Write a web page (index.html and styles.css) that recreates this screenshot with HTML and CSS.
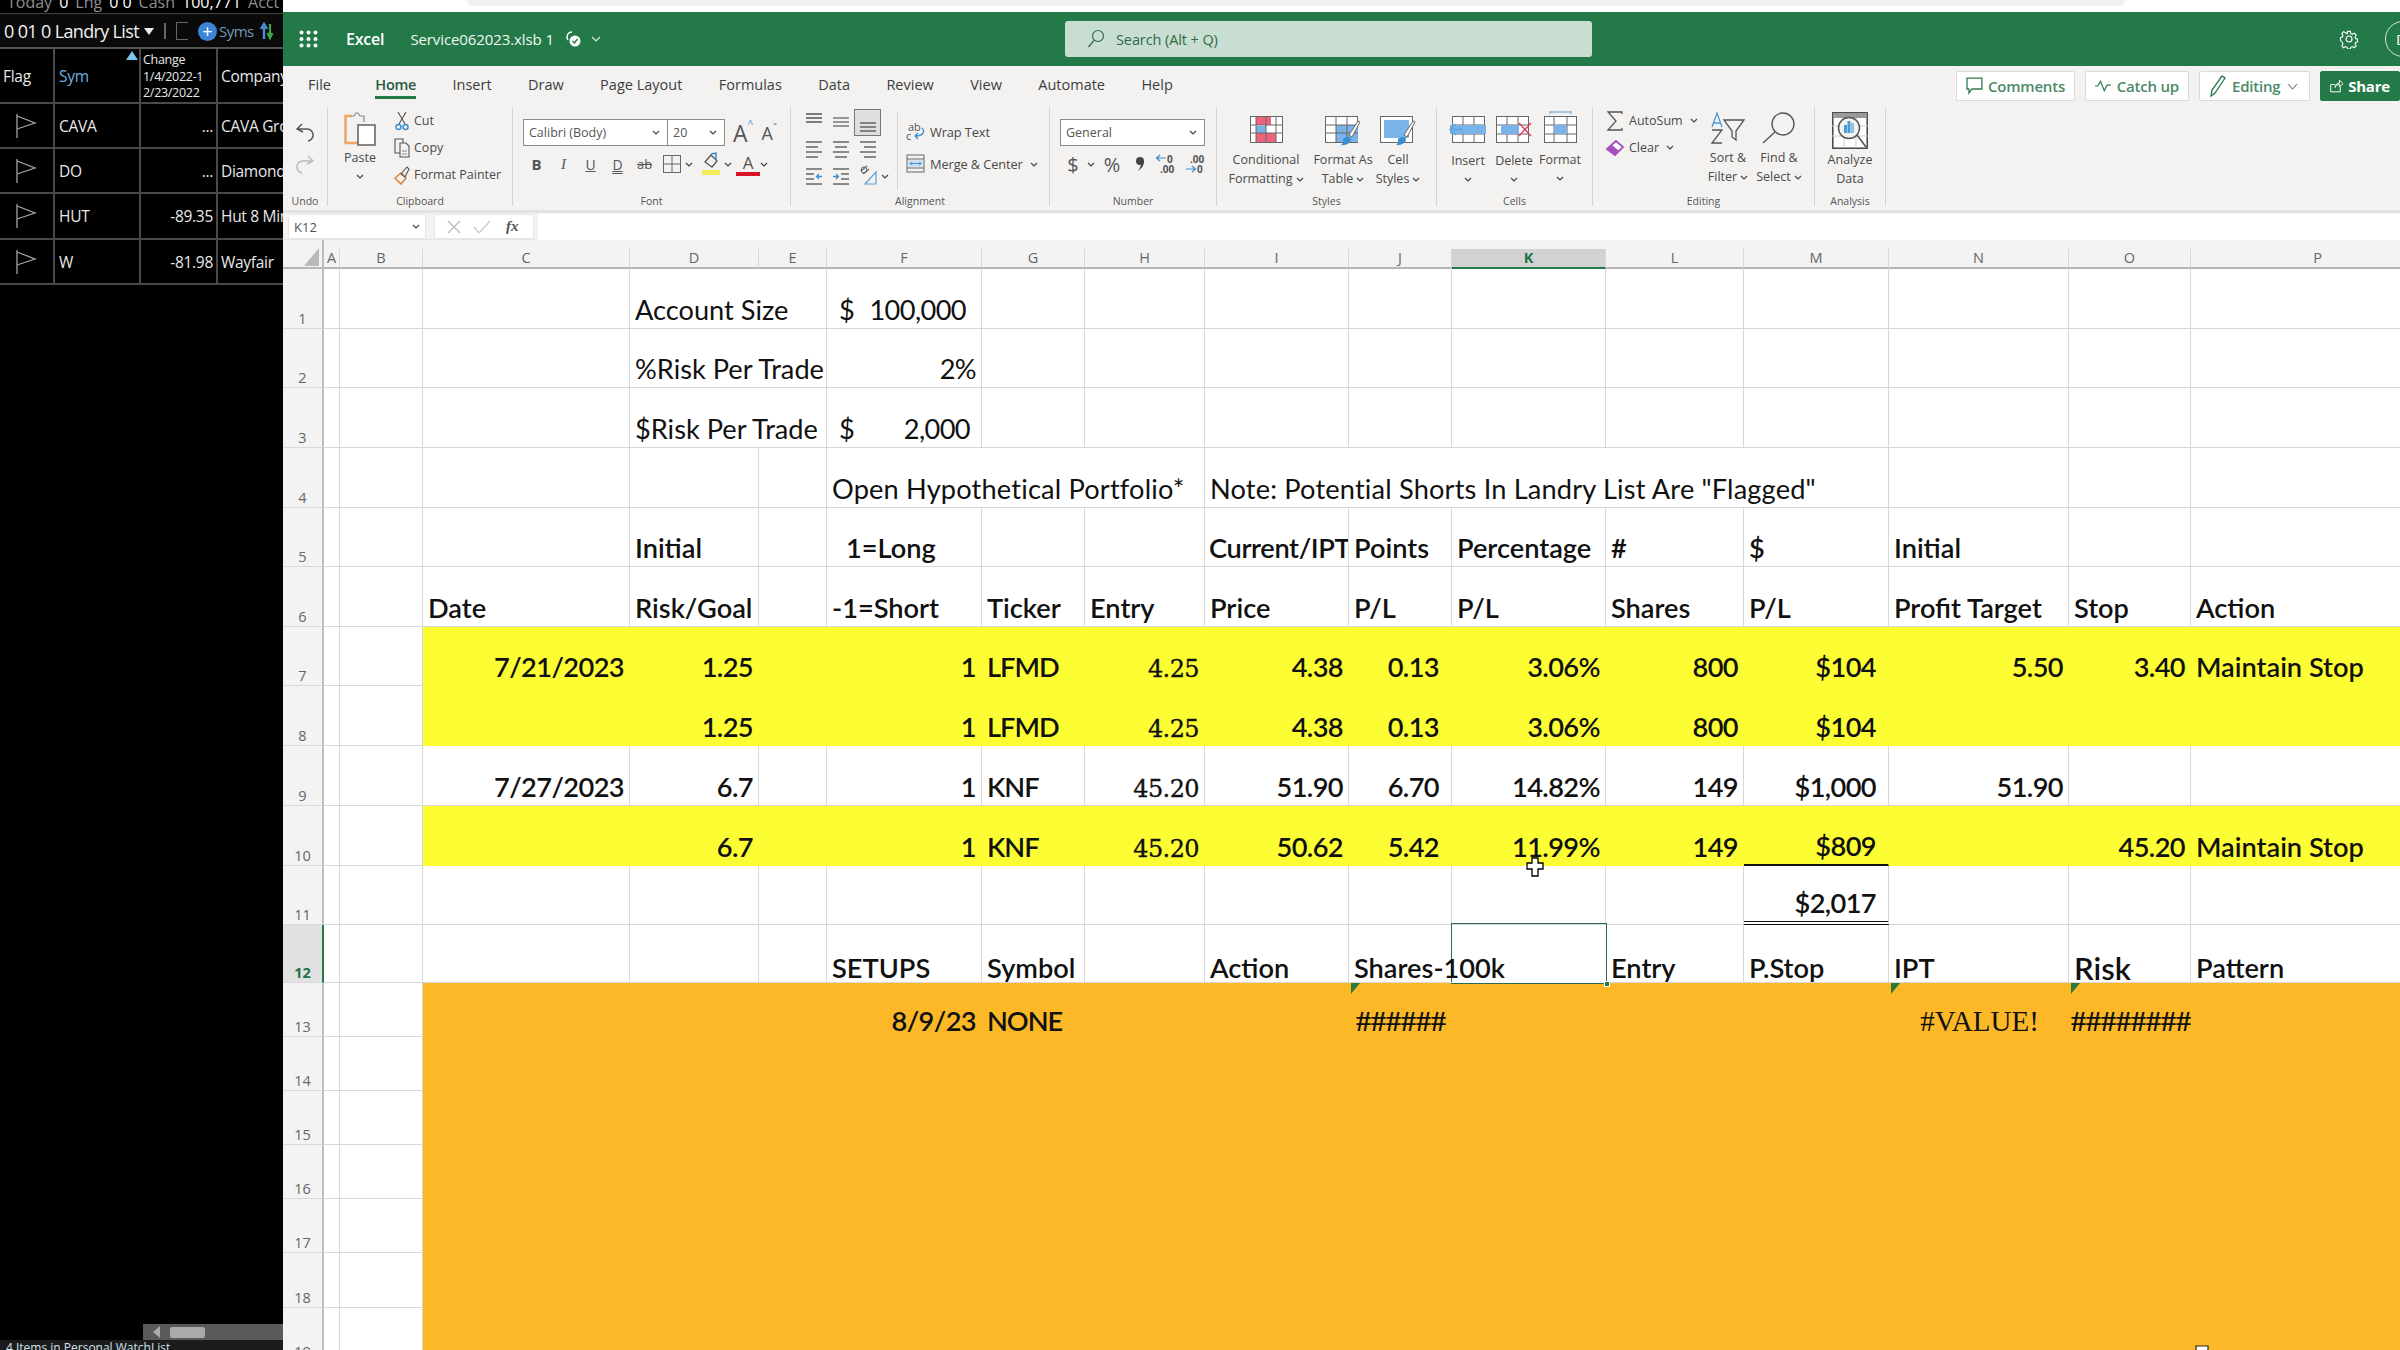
FILE: index.html
```
<!DOCTYPE html>
<html lang="en">
<head>
<meta charset="utf-8">
<title>Excel</title>
<link rel="stylesheet" href="styles.css">
</head>
<body>
<svg class="sprite" width="0" height="0"><symbol id="ch" viewBox="0 0 8 5"><path d="M1 1l3 3 3-3" fill="none" stroke="#444" stroke-width="1.2"/></symbol>
<symbol id="flag" viewBox="0 0 22 26"><path d="M2 1v24M2 3l18 7-18 6" fill="none" stroke="#a5a5a5" stroke-width="1.3"/></symbol></svg>
<div class="app">
<aside class="left">
  <div class="l-top"><span class="mut">Today</span><b>0</b><span class="mut">Lng</span><b>0 0</b><span class="mut">Cash</span><b>100,771</b><span class="mut">Acct Val</span><b>1</b></div>
  <div class="l-bar">
    <span class="l-title">0 01 0 Landry List</span><span class="tri"></span><span class="l-sep"></span><span class="l-box"></span>
    <span class="l-plus">+</span><span class="l-syms">Syms</span>
    <svg class="l-arrows" width="14" height="20" viewBox="0 0 14 20"><path d="M4 18V6M1 8l3-5 3 5" stroke="#4a90d9" stroke-width="2.4" fill="none"/><path d="M10 3v12M7.500 12l2.500 5 2.500-5" stroke="#3fa34d" stroke-width="2.2" fill="none"/></svg>
    <span class="l-lines"></span>
  </div>
  <div class="l-table">
    <div class="lc lh">Flag</div><div class="lc lh sym"><i class="sort"></i>Sym</div><div class="lc chg">Change<br>1/4/2022-1<br>2/23/2022</div><div class="lc lh">Company</div>
    <div class="lc fl"><svg width="22" height="26"><use href="#flag"/></svg></div><div class="lc">CAVA</div><div class="lc num">...</div><div class="lc">CAVA Group</div>
    <div class="lc fl"><svg width="22" height="26"><use href="#flag"/></svg></div><div class="lc">DO</div><div class="lc num">...</div><div class="lc">Diamond</div>
    <div class="lc fl"><svg width="22" height="26"><use href="#flag"/></svg></div><div class="lc">HUT</div><div class="lc num">-89.35</div><div class="lc">Hut 8 Mining</div>
    <div class="lc fl"><svg width="22" height="26"><use href="#flag"/></svg></div><div class="lc">W</div><div class="lc num">-81.98</div><div class="lc">Wayfair</div>
  </div>
  <div class="l-space"></div>
  <div class="l-scroll"><i class="s-arrow"></i><i class="s-thumb"></i></div>
  <div class="l-status">4 Items in Personal WatchList</div>
</aside>

<main class="excel">
  <div class="topstrip"><div class="topshape"></div></div>
  <header class="titlebar">
    <div class="t-left">
    <svg class="waffle" width="19" height="18" viewBox="0 0 19 18" fill="#fff"><circle cx="2.500" cy="2.500" r="2"/><circle cx="9.500" cy="2.500" r="2"/><circle cx="16.500" cy="2.500" r="2"/><circle cx="2.500" cy="9" r="2"/><circle cx="9.500" cy="9" r="2"/><circle cx="16.500" cy="9" r="2"/><circle cx="2.500" cy="15.500" r="2"/><circle cx="9.500" cy="15.500" r="2"/><circle cx="16.500" cy="15.500" r="2"/></svg>
    <span class="appname">Excel</span>
    <span class="fname">Service062023.xlsb 1</span>
    <svg class="cloud" width="18" height="18" viewBox="0 0 18 18"><path d="M8 2a5 5 0 0 0-4 8" fill="none" stroke="#fff" stroke-width="1.300"/><circle cx="11" cy="11" r="5.500" fill="#fff"/><path d="M8.500 11l2 2 3-4" fill="none" stroke="#237a48" stroke-width="1.400"/></svg>
    <svg class="tchev" width="10" height="6" viewBox="0 0 10 6"><path d="M1 1l4 4 4-4" fill="none" stroke="#d8e8de" stroke-width="1.200"/></svg>
    </div>
    <div class="search">
      <svg width="18" height="20" viewBox="0 0 18 20"><circle cx="11" cy="7" r="5.500" fill="none" stroke="#2e6b4a" stroke-width="1.200"/><path d="M7 11.500L1.500 18" stroke="#2e6b4a" stroke-width="1.200"/></svg>
      <span>Search (Alt + Q)</span>
    </div>
    <svg class="gear" width="20" height="20" viewBox="0 0 20 20" fill="none" stroke="#fff" stroke-width="1.200"><circle cx="10" cy="10" r="3"/><path d="M8.500 1.500h3l.5 2.500 1.800.8 2.200-1.300 2 2.200-1.300 2.100.6 1.700 2.200.7v3l-2.200.6-.6 1.700 1.300 2.200-2 2-2.200-1.300-1.800.8-.5 2h-3l-.5-2-1.800-.8-2.200 1.300-2-2 1.300-2.200-.6-1.700L.5 11.500v-3l2.200-.7.6-1.700L2 4l2-2.200 2.200 1.300L8 4.200z" transform="translate(1 1) scale(.9)"/></svg>
    <div class="avatar">D</div>
  </header>

  <nav class="tabs">
    <span class="tab first">File</span><span class="tab on">Home</span><span class="tab">Insert</span><span class="tab">Draw</span><span class="tab">Page Layout</span><span class="tab">Formulas</span><span class="tab">Data</span><span class="tab">Review</span><span class="tab">View</span><span class="tab">Automate</span><span class="tab">Help</span>
    <div class="actions">
      <button class="act">
        <svg width="17" height="18" viewBox="0 0 17 18" fill="none" stroke="#2c7a50" stroke-width="1.300"><path d="M1 1h15v11H6l-3 4v-4H1z"/></svg>Comments</button>
      <button class="act">
        <svg width="18" height="12" viewBox="0 0 18 12" fill="none" stroke="#2c7a50" stroke-width="1.300"><path d="M0 6h3l3-5 4 10 3-6h4"/></svg>Catch up</button>
      <button class="act">
        <svg width="18" height="24" viewBox="0 0 18 24" fill="none" stroke="#2c7a50" stroke-width="1.300"><path d="M2 22l1-6L13 2l3 2L6 19z"/></svg>Editing
        <svg class="ec" width="11" height="7" viewBox="0 0 11 7"><path d="M1 1l4.500 5L10 1" fill="none" stroke="#777" stroke-width="1.100"/></svg></button>
      <button class="act share">
        <svg width="18" height="20" viewBox="0 0 18 20" fill="none" stroke="#fff" stroke-width="1.300"><path d="M14 11v7H1V8h6M7 12c0-4 3-6 6-6V2l5 5-5 4V8c-3 0-5 1-6 4z"/></svg>Share</button>
    </div>
  </nav>

  <section class="ribbon">
    <div class="grp g-undo">
      <div class="g-body undo-body">
        <svg width="18" height="20" viewBox="0 0 18 20" fill="none" stroke="#555" stroke-width="1.500"><path d="M6 1L1 6l6 3M1 6h9a6 6 0 0 1 2 12"/></svg>
        <svg width="18" height="20" viewBox="0 0 18 20" fill="none" stroke="#bbb" stroke-width="1.500"><path d="M12 1l5 5-6 3M17 6H8a6 6 0 0 0-2 12"/></svg>
      </div>
      <div class="g-label">Undo</div>
    </div>

    <div class="grp g-clip">
      <div class="g-body clip-body">
        <div class="paste">
          <svg width="32" height="34" viewBox="0 0 32 34"><path d="M8 4H1.500v27H14" fill="none" stroke="#e8a866" stroke-width="2.500"/><path d="M8 4h2l2-3h2l2 3h4v6" fill="none" stroke="#888" stroke-width="1.200"/><rect x="14" y="13" width="17" height="20" fill="#fff" stroke="#555" stroke-width="1.400"/></svg>
          <span>Paste</span>
          <svg class="chev" width="8" height="5"><use href="#ch"/></svg>
        </div>
        <div class="smalls">
          <div class="sm"><svg width="16" height="20" viewBox="0 0 16 20" fill="none"><path d="M4 1l7 12M12 1L5 13" stroke="#555" stroke-width="1.100"/><circle cx="4.500" cy="16" r="2.500" stroke="#3b8fd0" stroke-width="1.500"/><circle cx="11.500" cy="16" r="2.500" stroke="#3b8fd0" stroke-width="1.500"/></svg>Cut</div>
          <div class="sm"><svg width="16" height="20" viewBox="0 0 16 20" fill="#f3f2f1" stroke="#555" stroke-width="1.100"><path d="M1 1h8v14H1z"/><path d="M6 5h6l3 3v11H6z"/><path d="M8 13h5M8 16h5" stroke="#888"/></svg>Copy</div>
          <div class="sm"><svg width="16" height="20" viewBox="0 0 16 20" fill="none"><path d="M1 13l6-5 5 5-5 6z" stroke="#d8893a" stroke-width="1.600"/><path d="M7 9l6-7 2 2-4 8z" stroke="#555" stroke-width="1.100"/></svg>Format Painter</div>
        </div>
      </div>
      <div class="g-label">Clipboard</div>
    </div>

    <div class="grp g-font">
      <div class="g-body font-body">
        <div class="combos">
          <div class="combo c-font"><span>Calibri (Body)</span><svg class="chev" width="8" height="5"><use href="#ch"/></svg></div>
          <div class="combo c-size"><span>20</span><svg class="chev" width="8" height="5"><use href="#ch"/></svg></div>
          <span class="grow">A<i>^</i></span><span class="shrink">A<i>ˇ</i></span>
        </div>
        <div class="frow">
          <span class="fb bold">B</span><span class="fb ital">I</span><span class="fb und">U</span><span class="fb dbl">D</span><span class="fb strike">ab</span>
          <span class="fb"><svg width="18" height="18" viewBox="0 0 18 18" fill="none" stroke="#666"><rect x=".5" y=".5" width="17" height="17"/><path d="M9 0v18M0 9h18"/></svg></span><svg class="mchev" width="8" height="5"><use href="#ch"/></svg>
          <span class="fb ml4"><svg width="18" height="24" viewBox="0 0 18 24"><path d="M3 10l6-7 6 6-5 6z" fill="none" stroke="#555" stroke-width="1.300"/><path d="M9 2l5-1v7" fill="none" stroke="#3b7fc4" stroke-width="1.400"/><rect y="18" width="18" height="5" fill="#f2ef5a"/></svg></span><svg class="mchev" width="8" height="5"><use href="#ch"/></svg>
          <span class="fb fcolor ml4">A</span><svg class="mchev" width="8" height="5"><use href="#ch"/></svg>
        </div>
      </div>
      <div class="g-label">Font</div>
    </div>

    <div class="grp g-align">
      <div class="g-body align-body">
        <div class="al-grid">
          <span class="ai"><svg width="18" height="27" viewBox="0 0 18 27" stroke="#555" stroke-width="1.300"><path d="M1 5h16M1 9h16M1 13h16"/></svg></span>
          <span class="ai"><svg width="18" height="27" viewBox="0 0 18 27" stroke="#777" stroke-width="1.300"><path d="M1 9h16M1 13h16M1 17h16"/></svg></span>
          <span class="ai sel"><svg width="18" height="25" viewBox="0 0 18 25" stroke="#666" stroke-width="1.300"><path d="M1 13h16M1 17h16M1 21h16"/></svg></span>
          <span class="ai"><svg width="18" height="26" viewBox="0 0 18 26" stroke="#666" stroke-width="1.300"><path d="M1 6h16M1 11h12M1 16h16M1 21h12"/></svg></span>
          <span class="ai"><svg width="18" height="26" viewBox="0 0 18 26" stroke="#666" stroke-width="1.300"><path d="M1 6h16M3 11h12M1 16h16M3 21h12"/></svg></span>
          <span class="ai"><svg width="18" height="26" viewBox="0 0 18 26" stroke="#666" stroke-width="1.300"><path d="M1 6h16M5 11h12M1 16h16M5 21h12"/></svg></span>
          <span class="ai"><svg width="18" height="26" viewBox="0 0 18 26" fill="none" stroke="#666" stroke-width="1.300"><path d="M1 6h16M1 11h8M1 16h8M1 21h16"/><path d="M17 13.500h-5M14 11l-2.500 2.500 2.500 2.500" stroke="#3b8fd0"/></svg></span>
          <span class="ai"><svg width="18" height="26" viewBox="0 0 18 26" fill="none" stroke="#666" stroke-width="1.300"><path d="M1 6h16M9 11h8M9 16h8M1 21h16"/><path d="M1 13.500h5M4 11l2.500 2.500L4 16" stroke="#3b8fd0"/></svg></span>
          <span class="ai"><svg width="18" height="24" viewBox="0 0 18 24" fill="none"><path d="M2 8l6-5M4 11l6-5" stroke="#666" stroke-width="1.300"/><circle cx="5" cy="7" r="3" stroke="#666"/><path d="M6 21L17 9v12z" stroke="#5a9fd8" stroke-width="1.200"/></svg><svg class="ochev" width="8" height="5"><use href="#ch"/></svg></span>
        </div>
        <i class="al-sep"></i>
        <div class="wrapcol">
          <div class="sm tall"><svg width="20" height="20" viewBox="0 0 20 20"><text x="2" y="9" class="ab">ab</text><text x="0" y="18" class="ab">c</text><path d="M16 6c4 4 0 8-6 8M12 11l-3 3 3 3" fill="none" stroke="#3b8fd0" stroke-width="1.300"/></svg>Wrap Text</div>
          <div class="sm tall"><svg width="20" height="20" viewBox="0 0 20 20" fill="none"><rect x="1" y="1" width="17" height="17" stroke="#666"/><path d="M1 5h17M1 14h17" stroke="#666"/><rect x="2" y="6" width="15" height="7" fill="#cfe2f3"/><path d="M4 9.500h11M6 7.500l-2 2 2 2M13 7.500l2 2-2 2" stroke="#3b8fd0"/></svg>Merge &amp; Center <svg class="ichev" width="8" height="5"><use href="#ch"/></svg></div>
        </div>
      </div>
      <div class="g-label">Alignment</div>
    </div>

    <div class="grp g-num">
      <div class="g-body num-body">
        <div class="combo c-num"><span>General</span><svg class="chev" width="8" height="5"><use href="#ch"/></svg></div>
        <div class="nrow">
          <span class="nb n-d">$</span><svg class="mchev nch" width="8" height="5"><use href="#ch"/></svg><span class="nb n-p">%</span><span class="nb n-c"><svg width="10" height="16" viewBox="0 0 10 16" fill="#444"><circle cx="5" cy="5" r="4"/><path d="M9 5c0 5-3 8-6 10 2-3 3-5 3-8z"/></svg></span>
          <span class="nb n-s"><svg width="22" height="22" viewBox="0 0 22 22" fill="none"><path d="M11 5H2M5 2L1.500 5 5 8" stroke="#3b8fd0" stroke-width="1.200"/><text x="12" y="10" class="dec">0</text><text x="5" y="20" class="dec">.00</text></svg></span>
          <span class="nb n-t"><svg width="22" height="22" viewBox="0 0 22 22" fill="none"><text x="6" y="10" class="dec">.00</text><text x="13" y="20" class="dec">0</text><path d="M2 16h9M8 13l3.500 3L8 19" stroke="#3b8fd0" stroke-width="1.200"/></svg></span>
        </div>
      </div>
      <div class="g-label">Number</div>
    </div>

    <div class="grp g-sty">
      <div class="g-body big-row">
        <div class="big b-cf">
          <svg width="33" height="27" viewBox="0 0 33 27"><rect x=".5" y=".5" width="32" height="26" fill="#fff" stroke="#666"/><rect x="6" y="1" width="15" height="8" fill="#f0627c"/><rect x="6" y="10" width="10" height="7" fill="#79b3e8"/><rect x="6" y="17" width="20" height="9" fill="#f0627c"/><path d="M6 0v27M16 0v27M26 0v27M0 9h33M0 17h33" stroke="#666" fill="none"/></svg>
          <span>Conditional<br>Formatting<svg class="ichev" width="8" height="5"><use href="#ch"/></svg></span>
        </div>
        <div class="big b-ft">
          <svg width="36" height="32" viewBox="0 0 36 32"><rect x=".5" y=".5" width="32" height="26" fill="#fff" stroke="#666"/><rect x="11" y="9" width="22" height="17" fill="#79b3e8"/><path d="M11 0v27M22 0v27M0 9h33M0 17h33" stroke="#666" fill="none"/><path d="M24 19l9-14 2 1-8 15z" fill="#fff" stroke="#666"/><path d="M18 23c4-3 8-2 8 0 0 4-6 7-10 6 2-1 2-3 2-6z" fill="#3b8fd0"/></svg>
          <span>Format As<br>Table<svg class="ichev" width="8" height="5"><use href="#ch"/></svg></span>
        </div>
        <div class="big b-cs">
          <svg width="36" height="32" viewBox="0 0 36 32"><rect x=".5" y=".5" width="32" height="26" fill="#fff" stroke="#666"/><rect x="4" y="4" width="25" height="18" fill="#79b3e8"/><path d="M24 19l9-14 2 1-8 15z" fill="#fff" stroke="#666"/><path d="M18 23c4-3 8-2 8 0 0 4-6 7-10 6 2-1 2-3 2-6z" fill="#3b8fd0"/></svg>
          <span>Cell<br>Styles<svg class="ichev" width="8" height="5"><use href="#ch"/></svg></span>
        </div>
      </div>
      <div class="g-label">Styles</div>
    </div>

    <div class="grp g-cells">
      <div class="g-body big-row cells-row">
        <div class="big b-cell">
          <svg width="38" height="27" viewBox="0 0 38 27"><rect x="3.500" y=".5" width="32" height="26" fill="#fff" stroke="#666"/><path d="M14 0v27M25 0v27M3 9h33M3 18h33" stroke="#666" fill="none"/><rect x="1" y="9" width="36" height="9" fill="#79b3e8"/><path d="M14 13.500H2M7 8l-6 5.500L7 19" stroke="#5aa5e0" fill="none" stroke-width="1.500"/></svg>
          <span>Insert</span><svg class="chev" width="8" height="5"><use href="#ch"/></svg>
        </div>
        <div class="big b-cell">
          <svg width="36" height="27" viewBox="0 0 36 27"><rect x=".5" y=".5" width="32" height="26" fill="#fff" stroke="#666"/><path d="M11 0v27M22 0v27M0 9h33M0 18h33" stroke="#666" fill="none"/><rect x="5" y="9" width="18" height="9" fill="#79b3e8"/><path d="M23 7l12 13M35 7L23 20" stroke="#e0455f" stroke-width="1.500"/></svg>
          <span>Delete</span><svg class="chev" width="8" height="5"><use href="#ch"/></svg>
        </div>
        <div class="big b-cell b-fmt">
          <svg width="33" height="32" viewBox="0 0 33 32"><path d="M6 1h21M6 0v3M27 0v3" stroke="#5a9fd8" fill="none"/><rect x=".5" y="5.500" width="32" height="26" fill="#fff" stroke="#666"/><path d="M0 14h33M0 23h33M10 5v27M23 5v27" stroke="#666" fill="none"/><rect x="10" y="14" width="13" height="9" fill="#79b3e8"/></svg>
          <span>Format</span><svg class="chev" width="8" height="5"><use href="#ch"/></svg>
        </div>
      </div>
      <div class="g-label">Cells</div>
    </div>

    <div class="grp g-edit">
      <div class="g-body big-row">
        <div class="smalls ed">
          <div class="sm"><svg width="19" height="20" viewBox="0 0 19 20" fill="none" stroke="#555" stroke-width="1.300"><path d="M16 3V1H2l8 9-8 9h14v-2"/></svg>AutoSum <svg class="ichev" width="8" height="5"><use href="#ch"/></svg></div>
          <div class="sm"><svg width="19" height="20" viewBox="0 0 19 20" fill="none"><path d="M1 11l9-8 7 6-8 8z" fill="#fff" stroke="#a64fbf" stroke-width="1.800"/><path d="M1 11l5-4 7 6-4 4z" fill="#a64fbf"/></svg>Clear <svg class="ichev" width="8" height="5"><use href="#ch"/></svg></div>
        </div>
        <div class="big b-sort">
          <svg width="36" height="32" viewBox="0 0 36 32"><path d="M2 15L7 1l5 14M3.500 11h7" fill="none" stroke="#4a9ad4" stroke-width="1.300"/><path d="M2 18h10L2 31h10" fill="none" stroke="#555" stroke-width="1.300"/><path d="M14 8h20l-8 11v9l-4-3v-6z" fill="none" stroke="#555" stroke-width="1.300"/></svg>
          <span>Sort &amp;<br>Filter<svg class="ichev" width="8" height="5"><use href="#ch"/></svg></span>
        </div>
        <div class="big b-find">
          <svg width="36" height="32" viewBox="0 0 36 32" fill="none" stroke="#555" stroke-width="1.300"><circle cx="22" cy="12" r="11"/><path d="M14 20L2 31"/></svg>
          <span>Find &amp;<br>Select<svg class="ichev" width="8" height="5"><use href="#ch"/></svg></span>
        </div>
      </div>
      <div class="g-label">Editing</div>
    </div>

    <div class="grp g-ana">
      <div class="g-body big-row">
        <div class="big b-ana">
          <svg width="36" height="37" viewBox="0 0 36 37"><rect x=".8" y=".8" width="34.400" height="35.400" fill="#fff" stroke="#444" stroke-width="1.500"/><rect x="1" y="1" width="34" height="5" fill="#999"/><path d="M12 6v30M24 6v30M0 14h36M0 24h36" stroke="#ccc" fill="none"/><circle cx="17" cy="16" r="10.500" fill="#f3f2f1" stroke="#555" stroke-width="1.500"/><rect x="12" y="13" width="3" height="8" fill="#4a9ad4"/><rect x="15.500" y="9" width="3" height="12" fill="#4a9ad4"/><rect x="19" y="11" width="3" height="10" fill="#8fc1e8"/><path d="M25 23l9 12" stroke="#555" stroke-width="1.500"/></svg>
          <span>Analyze<br>Data</span>
        </div>
      </div>
      <div class="g-label">Analysis</div>
    </div>
  </section>

  <div class="fbar">
    <div class="namebox"><span>K12</span><svg class="chev" width="8" height="5"><use href="#ch"/></svg></div>
    <div class="fxbox">
      <svg width="16" height="16" viewBox="0 0 16 16" stroke="#bbb" stroke-width="1.300"><path d="M2 2l12 12M14 2L2 14"/></svg>
      <svg width="18" height="14" viewBox="0 0 18 14" fill="none" stroke="#ccc" stroke-width="1.300"><path d="M1 7l5 6L17 1"/></svg>
      <span class="fx">fx</span>
    </div>
    <div class="finput"></div>
  </div>

  <div class="sheet">
    <div class="row colhead">
      <div class="corner"><i></i></div>
      <div class="ch">A</div><div class="ch">B</div><div class="ch">C</div><div class="ch">D</div><div class="ch">E</div><div class="ch">F</div><div class="ch">G</div><div class="ch">H</div><div class="ch">I</div><div class="ch">J</div><div class="ch active">K</div><div class="ch">L</div><div class="ch">M</div><div class="ch">N</div><div class="ch">O</div><div class="ch">P</div>
    </div>

    <div class="row h60">
      <div class="rh">1</div><div class="c"></div><div class="c"></div><div class="c"></div>
      <div class="c s2">Account Size</div><div class="c acct"><span>$</span><span>100,000</span></div><div class="c"></div><div class="c"></div><div class="c"></div><div class="c"></div><div class="c"></div><div class="c"></div><div class="c"></div><div class="c"></div><div class="c"></div><div class="c"></div>
    </div>
    <div class="row h59">
      <div class="rh">2</div><div class="c"></div><div class="c"></div><div class="c"></div>
      <div class="c s2">%Risk Per Trade</div><div class="c r">2%</div><div class="c"></div><div class="c"></div><div class="c"></div><div class="c"></div><div class="c"></div><div class="c"></div><div class="c"></div><div class="c"></div><div class="c"></div><div class="c"></div>
    </div>
    <div class="row h60">
      <div class="rh">3</div><div class="c"></div><div class="c"></div><div class="c"></div>
      <div class="c s2">$Risk Per Trade</div><div class="c acct acct2"><span>$</span><span>2,000</span></div><div class="c"></div><div class="c"></div><div class="c"></div><div class="c"></div><div class="c"></div><div class="c"></div><div class="c"></div><div class="c"></div><div class="c"></div><div class="c"></div>
    </div>
    <div class="row h60">
      <div class="rh">4</div><div class="c"></div><div class="c"></div><div class="c"></div><div class="c"></div><div class="c"></div>
      <div class="c s3 airy">Open Hypothetical Portfolio*</div><div class="c s5 airy">Note: Potential Shorts In Landry List Are "Flagged"</div><div class="c"></div><div class="c"></div><div class="c"></div>
    </div>
    <div class="row h59 hd">
      <div class="rh">5</div><div class="c"></div><div class="c"></div><div class="c"></div>
      <div class="c">Initial</div><div class="c"></div><div class="c ind">1=Long</div><div class="c"></div><div class="c"></div><div class="c tight">Current/IPT</div><div class="c">Points</div><div class="c">Percentage</div><div class="c">#</div><div class="c">$</div><div class="c">Initial</div><div class="c"></div><div class="c"></div>
    </div>
    <div class="row h60 hd">
      <div class="rh">6</div><div class="c"></div><div class="c"></div>
      <div class="c">Date</div><div class="c">Risk/Goal</div><div class="c"></div><div class="c">-1=Short</div><div class="c">Ticker</div><div class="c">Entry</div><div class="c">Price</div><div class="c">P/L</div><div class="c">P/L</div><div class="c">Shares</div><div class="c">P/L</div><div class="c">Profit Target</div><div class="c">Stop</div><div class="c">Action</div>
    </div>
    <div class="row h59 hd yel">
      <div class="rh">7</div><div class="c"></div><div class="c"></div>
      <div class="c y r">7/21/2023</div><div class="c y r">1.25</div><div class="c y"></div><div class="c y r">1</div><div class="c y caps">LFMD</div><div class="c y r ser">4.25</div><div class="c y r">4.38</div><div class="c y r p12">0.13</div><div class="c y r">3.06%</div><div class="c y r">800</div><div class="c y r p12">$104</div><div class="c y r">5.50</div><div class="c y r">3.40</div><div class="c y">Maintain Stop</div>
    </div>
    <div class="row h60 hd yel">
      <div class="rh">8</div><div class="c"></div><div class="c"></div>
      <div class="c y"></div><div class="c y r">1.25</div><div class="c y"></div><div class="c y r">1</div><div class="c y caps">LFMD</div><div class="c y r ser">4.25</div><div class="c y r">4.38</div><div class="c y r p12">0.13</div><div class="c y r">3.06%</div><div class="c y r">800</div><div class="c y r p12">$104</div><div class="c y"></div><div class="c y"></div><div class="c y"></div>
    </div>
    <div class="row h60 hd">
      <div class="rh">9</div><div class="c"></div><div class="c"></div>
      <div class="c r">7/27/2023</div><div class="c r">6.7</div><div class="c"></div><div class="c r">1</div><div class="c caps">KNF</div><div class="c r ser">45.20</div><div class="c r">51.90</div><div class="c r p12">6.70</div><div class="c r">14.82%</div><div class="c r">149</div><div class="c r p12">$1,000</div><div class="c r">51.90</div><div class="c"></div><div class="c"></div>
    </div>
    <div class="row h60 hd yel">
      <div class="rh">10</div><div class="c"></div><div class="c"></div>
      <div class="c y"></div><div class="c y r">6.7</div><div class="c y"></div><div class="c y r">1</div><div class="c y caps">KNF</div><div class="c y r ser">45.20</div><div class="c y r">50.62</div><div class="c y r p12">5.42</div><div class="c y r">11.99%</div><div class="c y r">149</div><div class="c y r p12 ul">$809</div><div class="c y"></div><div class="c y r">45.20</div><div class="c y">Maintain Stop</div>
    </div>
    <div class="row h59 hd">
      <div class="rh">11</div><div class="c"></div><div class="c"></div><div class="c"></div><div class="c"></div><div class="c"></div><div class="c"></div><div class="c"></div><div class="c"></div><div class="c"></div><div class="c"></div><div class="c"></div><div class="c"></div>
      <div class="c r p12 dbl-ul">$2,017</div><div class="c"></div><div class="c"></div><div class="c"></div>
    </div>
    <div class="row h58 hd low">
      <div class="rh rh-on">12</div><div class="c"></div><div class="c"></div><div class="c"></div><div class="c"></div><div class="c"></div>
      <div class="c">SETUPS</div><div class="c">Symbol</div><div class="c"></div><div class="c">Action</div><div class="c over">Shares-100k</div><div class="c selected"><i></i></div><div class="c">Entry</div><div class="c">P.Stop</div><div class="c">IPT</div><div class="c bigtxt">Risk</div><div class="c">Pattern</div>
    </div>

    <div class="row h54 hd org">
      <div class="rh">13</div><div class="c"></div><div class="c"></div>
      <div class="c o s3w"></div><div class="c o r">8/9/23</div><div class="c o caps">NONE</div><div class="c o s2o"></div><div class="c o hash tick">######</div><div class="c o s3o"></div><div class="c o hash ctr tick">#VALUE!</div><div class="c o hash h2 tick">########</div><div class="c o"></div>
    </div>
    <div class="row h54 org"><div class="rh">14</div><div class="c"></div><div class="c"></div><div class="c o wide"></div></div>
    <div class="row h54 org"><div class="rh">15</div><div class="c"></div><div class="c"></div><div class="c o wide"></div></div>
    <div class="row h54 org"><div class="rh">16</div><div class="c"></div><div class="c"></div><div class="c o wide"></div></div>
    <div class="row h54 org"><div class="rh">17</div><div class="c"></div><div class="c"></div><div class="c o wide"></div></div>
    <div class="row h55 org"><div class="rh">18</div><div class="c"></div><div class="c"></div><div class="c o wide"></div></div>
    <div class="row h54 org"><div class="rh">19</div><div class="c"></div><div class="c"></div><div class="c o wide"></div></div>

    <svg class="cursor" width="18" height="20" viewBox="0 0 18 20"><path d="M6 1h6v5h5v6h-5v7H6v-7H1V6h5z" fill="#fff" stroke="#000" stroke-width="1.300"/></svg>
    <svg class="cursor2" width="14" height="6" viewBox="0 0 14 6"><path d="M1 5V1h12v4" fill="#fff" stroke="#222" stroke-width="1.200"/></svg>
  </div>
</main>
</div>
</body>
</html>
```
FILE: styles.css
```
* { box-sizing: border-box; }
html, body { margin: 0; padding: 0; }
body { width: 2400px; height: 1350px; overflow: hidden; background: #000; font-family: "Open Sans", "Liberation Sans", sans-serif; }
.sprite { position: absolute; }
.app { display: flex; width: 2400px; height: 1350px; }

/* left dark panel */
.left { width: 283px; flex: none; background: #000; color: #e8e8e8; display: flex; flex-direction: column; overflow: hidden; font-family: "Open Sans", sans-serif; }
.l-top { height: 14px; flex: none; line-height: 5px; font-size: 16px; white-space: nowrap; padding-left: 7px; display: flex; gap: 7px; border-bottom: 1px solid #444; overflow: hidden; }
.l-top b { font-weight: 400; color: #fff; }
.mut { color: #8f8f8f; }
.l-bar { height: 34px; flex: none; display: flex; align-items: center; padding-left: 4px; background: #0a0a0a; white-space: nowrap; overflow: hidden; }
.l-bar > * { flex: none; }
.l-title { font-size: 18px; letter-spacing: -.65px; color: #f2f2f2; }
.tri { width: 0; height: 0; border: 5px solid transparent; border-top: 7px solid #eee; border-bottom: 0; margin-left: 5px; }
.l-sep { width: 2px; height: 16px; background: #666; margin-left: 10px; }
.l-box { width: 12px; height: 18px; border: 1px solid #666; border-right: 0; margin-left: 10px; }
.l-plus { width: 19px; height: 19px; border-radius: 50%; background: #3d84d6; color: #fff; font-size: 18px; line-height: 18px; text-align: center; margin-left: 10px; }
.l-syms { color: #6f9ab8; font-size: 15px; margin-left: 2px; letter-spacing: -.5px; }
.l-arrows { margin-left: 6px; }
.l-lines { width: 8px; height: 14px; border-top: 2px solid #888; border-bottom: 2px solid #888; margin-left: 9px; }
.l-table { display: grid; grid-template-columns: 55px 86px 77px 65px; grid-template-rows: 55px 45px 45px 46px 45px; flex: none; font-size: 15.500px; border-top: 2px solid #555; margin-top: -1px; }
.lc { display: flex; align-items: center; padding-left: 4px; border-right: 2px solid #4a4a4a; border-bottom: 2px solid #4a4a4a; white-space: nowrap; overflow: hidden; letter-spacing: -.3px; position: relative; }
.lc:nth-child(4n) { border-right: 0; padding-left: 3px; }
.lc:nth-child(4n+1) { padding-left: 3px; }
.lc.sym { color: #6fb0e0; }
.lc.chg { display: block; font-size: 12.500px; line-height: 16.500px; padding: 3px 0 0 2px; }
.sort { position: absolute; right: 1px; top: 2px; width: 0; height: 0; border: 6px solid transparent; border-bottom: 9px solid #7cc4ea; border-top: 0; }
.lc.num { justify-content: flex-end; padding-right: 3px; }
.lc.fl { padding-left: 15px; }
.l-space { flex: 1; }
.l-scroll { height: 16px; flex: none; margin-left: 143px; background: #5a5a5a; display: flex; align-items: center; padding-left: 10px; }
.s-arrow { width: 0; height: 0; border: 6px solid transparent; border-right: 7px solid #aaa; border-left: 0; }
.s-thumb { width: 35px; height: 11px; background: #aaa; border-radius: 2px; margin-left: 10px; }
.l-status { height: 10px; flex: none; background: #1c1c1c; color: #cfe4ee; font-size: 12px; line-height: 16px; padding-left: 6px; overflow: hidden; white-space: nowrap; }

/* excel */
.excel { flex: 1; min-width: 0; background: #fff; display: flex; flex-direction: column; overflow: hidden; }
.topstrip { height: 12px; flex: none; background: #fff; }
.topshape { width: 1658px; height: 6px; margin-left: 184px; background: #f1f1f1; border-radius: 0 0 8px 8px; }
.titlebar { height: 54px; flex: none; background: #237a48; color: #fff; display: flex; align-items: center; white-space: nowrap; position: relative; }
.t-left { width: 782px; flex: none; display: flex; align-items: center; }
.waffle { margin-left: 16px; flex: none; }
.appname { font-weight: 600; font-size: 16px; margin-left: 28px; letter-spacing: -.2px; }
.fname { font-size: 15px; margin-left: 26px; letter-spacing: -.1px; color: #f2f7f4; }
.cloud { margin-left: 10px; flex: none; }
.tchev { margin-left: 9px; flex: none; }
.search { width: 527px; height: 36px; background: #c9ded2; border-radius: 3px; display: flex; align-items: center; padding-left: 22px; gap: 11px; color: #2e6b4a; font-size: 14.500px; flex: none; letter-spacing: -.1px; }
.gear { margin-left: auto; margin-right: 26px; flex: none; }
.avatar { width: 36px; height: 36px; border: 1px solid #d8e8de; border-radius: 50%; margin-right: -21px; flex: none; padding-left: 10px; line-height: 34px; font-size: 15px; }

.tabs { height: 39px; flex: none; background: #f3f2f1; display: flex; align-items: flex-start; padding-left: 25px; gap: 36.400px; font-size: 14.500px; color: #3e3e3e; white-space: nowrap; position: relative; }
.tab { height: 33px; padding-top: 8px; line-height: 22px; border-bottom: 3px solid transparent; }
.tab.first { margin-right: 8px; }
.tab.on { color: #2a5a40; border-bottom-color: #237a48; font-weight: 600; letter-spacing: -.3px; }
.actions { margin-left: auto; display: flex; gap: 10px; padding-top: 5px; }
.act { height: 30px; background: #fff; border: 1px solid #dcdad8; border-radius: 2px; font: 600 15px "Open Sans", sans-serif; color: #4b8a68; display: flex; align-items: center; gap: 5px; padding: 0 9px; letter-spacing: -.2px; }
.act:nth-child(1) { width: 119px; }
.act:nth-child(2) { width: 104px; }
.act:nth-child(3) { width: 111px; }
.act.share { width: 80px; background: #237a48; border-color: #237a48; color: #fff; font-weight: 700; }
.ec { margin-left: 2px; flex: none; }

/* ribbon */
.ribbon { height: 108px; flex: none; background: #f3f2f1; display: flex; padding: 2px 0 4px; border-bottom: 3px solid #e3e2e1; color: #4a4a4a; font-size: 12.500px; white-space: nowrap; }
.grp { display: flex; flex-direction: column; flex: none; border-right: 1px solid #d6d4d2; height: 99px; }
.g-undo { width: 45px; } .g-clip { width: 185px; } .g-font { width: 278px; } .g-align { width: 259px; } .g-num { width: 167px; } .g-sty { width: 220px; } .g-cells { width: 156px; } .g-edit { width: 222px; } .g-ana { width: 71px; }
.g-body { height: 85px; flex: none; }
.g-label { height: 14px; line-height: 18px; text-align: center; font-size: 10.500px; color: #555; }
.undo-body { display: flex; flex-direction: column; align-items: center; padding-top: 16px; gap: 12px; }
.clip-body { display: flex; }
.paste { width: 40px; margin-left: 12px; padding-top: 5px; display: flex; flex-direction: column; align-items: center; }
.paste span { line-height: 18px; margin-top: 3px; }
.paste .chev { margin-top: 7px; }
.smalls { margin-left: 14px; display: flex; flex-direction: column; }
.smalls.ed { margin-left: 13px; width: 98px; flex: none; }
.sm { height: 27px; display: flex; align-items: center; gap: 4px; }
.sm.tall { height: 26px; margin-bottom: 6px; gap: 4px; font-size: 12.800px; letter-spacing: -.1px; }
.ichev { margin-left: 3px; vertical-align: 1px; }
.font-body { padding: 12px 0 0 10px; }
.combos { display: flex; align-items: center; height: 27px; }
.combo { height: 27px; background: #fff; border: 1px solid #8a8a8a; display: flex; align-items: center; justify-content: space-between; padding: 0 7px 0 5px; font-size: 12.500px; color: #555; flex: none; }
.c-font { width: 144px; border-right: 0; }
.c-size { width: 58px; }
.c-num { width: 145px; }
.grow, .shrink { display: inline-flex; font-size: 23px; color: #555; margin-left: 8px; width: 29px; }
.shrink { font-size: 18px; margin-left: 0; }
.grow i, .shrink i { font-style: normal; font-size: 10px; color: #3b8fd0; line-height: 14px; }
.frow { display: flex; align-items: center; height: 26px; margin-top: 5px; }
.fb { width: 27px; text-align: center; font-size: 15px; color: #555; display: flex; align-items: center; justify-content: center; font-family: "Liberation Serif", serif; flex: none; }
.fb.bold { font: 700 15px "Open Sans", sans-serif; }
.fb.ital { font-style: italic; }
.fb.und { font: 14px "Open Sans", sans-serif; text-decoration: underline; }
.fb.dbl { font: 14px "Open Sans", sans-serif; text-decoration: underline double; }
.fb.strike { font: 13px "Open Sans", sans-serif; text-decoration: line-through; }
.fb.fcolor { font: 17px/20px "Open Sans", sans-serif; width: 24px; box-shadow: inset 0 -4px 0 #d9132a; padding-bottom: 3px; height: 24px; }
.ml4 { margin-left: 4px; }
.mchev { flex: none; }
.align-body { display: flex; }
.al-grid { display: grid; grid-template-columns: repeat(3, 27px); grid-template-rows: 27px 27px 27px; margin: 2px 0 0 9px; flex: none; }
.ai { display: flex; align-items: flex-start; justify-content: center; position: relative; }
.ai.sel { background: #e1dfdd; border: 1px solid #777; }
.ochev { position: absolute; right: -8px; top: 11px; }
.al-sep { width: 1px; height: 78px; background: #d6d4d2; margin: 5px 0 0 16px; flex: none; }
.wrapcol { margin-left: 8px; padding-top: 12px; }
.ab { font: 11px "Open Sans", sans-serif; fill: #555; }
.dec { font: 700 10px "Open Sans", sans-serif; fill: #555; }
.num-body { padding: 12px 0 0 10px; }
.nrow { display: flex; align-items: center; height: 26px; margin-top: 5px; }
.nb { display: flex; justify-content: center; align-items: center; flex: none; color: #555; }
.n-d { width: 26px; font-size: 20px; }
.nch { margin: 0 1px 0 1px; }
.n-p { width: 28px; font-size: 20px; margin-left: 2px; }
.n-c { width: 28px; }
.n-s { width: 24px; }
.n-t { width: 24px; margin-left: 5px; }
.big-row { display: flex; }
.big { display: flex; flex-direction: column; align-items: center; flex: none; text-align: center; line-height: 19px; }
.big svg:first-child { flex: none; }
.b-cf { width: 98px; padding-top: 9px; } .b-cf > span { margin-top: 7px; }
.b-ft { width: 56px; padding-top: 9px; height: 85px; } .b-ft > svg { margin-bottom: -5px; } .b-ft > span { margin-top: 7px; }
.b-cs { width: 54px; padding-top: 9px; } .b-cs > svg { margin-bottom: -5px; } .b-cs > span { margin-top: 7px; }
.cells-row { padding-left: 8px; }
.b-cell { width: 46px; padding-top: 9px; } .b-cell > span { margin-top: 8px; }
.b-cell .chev { margin-top: 7px; }
.b-fmt { padding-top: 4px; } .b-fmt > span { margin-top: 7px; }
.b-sort { width: 46px; padding-top: 5px; margin-left: 1px; } .b-sort > span { margin-top: 4px; }
.b-find { width: 48px; margin-left: 4px; padding-top: 5px; } .b-find > span { margin-top: 4px; }
.b-ana { width: 70px; padding-top: 5px; } .b-ana > span { margin-top: 1px; }

/* formula bar */
.fbar { height: 27px; flex: none; background: #f3f3f3; display: flex; padding-top: 1px; border-bottom: 1px solid #e4e4e4; }
.namebox { width: 138px; height: 25px; margin-left: 5px; background: #fff; border: 1px solid #e6e6e6; display: flex; align-items: center; justify-content: space-between; padding: 0 5px; font-size: 13px; color: #555; }
.fxbox { width: 100px; height: 25px; margin-left: 8px; background: #fff; border: 1px solid #e6e6e6; display: flex; align-items: center; gap: 11px; padding-left: 11px; }
.fx { font: italic 700 15px "Liberation Serif", serif; color: #555; margin-left: 4px; }
.finput { flex: 1; margin-left: 4px; background: #fff; height: 26px; }

/* sheet */
.sheet { flex: 1; position: relative; overflow: hidden; font-family: Lato, "Liberation Sans", sans-serif; font-size: 27.200px; color: #111; }
.row { display: grid; grid-template-columns: 41px 16px 83px 207px 129px 68px 155px 103px 120px 144px 103px 154px 138px 145px 180px 122px 254px; }
.h60 { height: 60px; } .h59 { height: 59px; } .h58 { height: 58px; } .h54 { height: 54px; } .h55 { height: 55px; }
.colhead { height: 29px; background: #f3f3f3; }
.corner { position: relative; border-bottom: 2px solid #b5b5b5; border-right: 2px solid #bdbdbd; }
.corner i { position: absolute; right: 3px; bottom: 1px; width: 15px; height: 18px; background: #b9b9b9; clip-path: polygon(100% 0, 100% 100%, 0 100%); }
.ch { margin-top: 9px; height: 20px; border-right: 1px solid #d8d8d8; border-bottom: 2px solid #b5b5b5; text-align: center; font: 14.500px/18px "Open Sans", sans-serif; color: #666; }
.ch.active { background: #d2d2d2; color: #217346; font-weight: 700; border-bottom-color: #237a48; }
.rh { background: #f3f3f3; border-right: 2px solid #bdbdbd; border-bottom: 1px solid #d8d8d8; display: flex; align-items: flex-end; justify-content: center; font: 14.500px/19px "Open Sans", sans-serif; color: #666; }
.rh-on { background: #e1e1e1; color: #217346; font-weight: 700; border-right-color: #237a48; }
.c { border-right: 1px solid #d8d8d8; border-bottom: 1px solid #d8d8d8; padding: 0 5px; line-height: 36px; display: flex; align-items: flex-end; white-space: nowrap; overflow: hidden; min-width: 0; }
.r { justify-content: flex-end; letter-spacing: -.6px; }
.s2 { grid-column: span 2; }
.s3 { grid-column: span 3; }
.s5 { grid-column: span 5; }
.hd .c { font-weight: 600; }
.acct { justify-content: space-between; padding: 0 15px 0 12px; letter-spacing: -.6px; }
.acct2 { padding-right: 11px; }
.airy { letter-spacing: .17px; }
.tight { letter-spacing: -.35px; padding-left: 4px; }
.caps { letter-spacing: -1px; }
.ind { padding-left: 19px; }
.c.ser { font-family: "DejaVu Serif", serif; font-size: 24px; font-weight: 400; line-height: 31px; -webkit-text-stroke: .35px #111; }
.p12 { padding-right: 12px; }
.y { background: #fdfd33; border-color: #fdfd33; }
.ul { border-bottom: 2px solid #111; }
.dbl-ul { border-bottom: 4px double #111; }
.low .c { line-height: 28px; }
.org .c { line-height: 30px; }
.over { overflow: visible; position: relative; z-index: 2; border-right: 0; }
.selected { position: relative; overflow: visible; border: 1px solid #2b6a4b; margin: -2px -1px -1px -1px; z-index: 1; }
.selected i { position: absolute; right: -4px; bottom: -4px; width: 6px; height: 6px; background: #237a48; border: 1px solid #fff; }
.c.bigtxt { font-size: 31px; }
.o { background: #fcb827; border-color: #fcb827; }
.wide { grid-column: span 14; }
.s3w { grid-column: span 3; }
.s2o { grid-column: span 2; }
.s3o { grid-column: span 3; }
.c.hash { font-family: "Liberation Serif", serif; font-weight: 700; font-size: 30px; position: relative; overflow: visible; padding-left: 7px; }
.c.ctr { justify-content: center; font-weight: 400; font-size: 29px; }
.c.h2 { padding-left: 2px; }
.tick::before { content: ""; position: absolute; left: 2px; top: 0; width: 9px; height: 11px; background: #2b7a3c; clip-path: polygon(0 0, 100% 0, 0 100%); }
.cursor { position: absolute; left: 1243px; top: 617px; z-index: 4; }
.cursor2 { position: absolute; left: 1912px; top: 1105px; z-index: 4; }
```
